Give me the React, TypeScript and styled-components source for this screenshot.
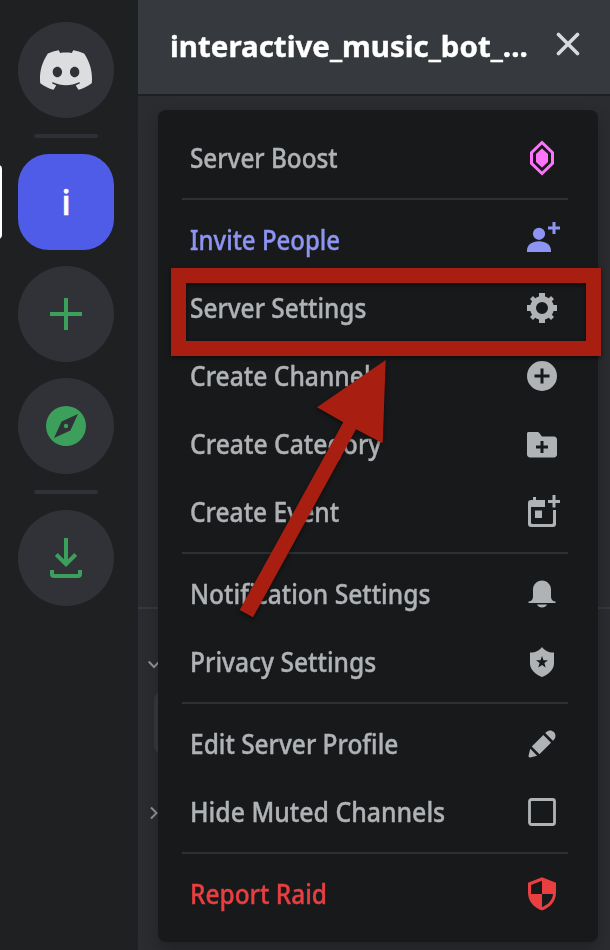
import React from 'react';
import styled, { createGlobalStyle } from 'styled-components';

const GlobalStyle = createGlobalStyle`
  * { box-sizing: border-box; }
  body {
    margin: 0;
    background: #1e2022;
    font-family: "Noto Sans", "Open Sans", sans-serif;
    overflow: hidden;
  }
  svg { display: block; flex: none; }
`;

const Page = styled.div`
  position: relative;
  display: flex;
  width: 610px;
  height: 950px;
  overflow: hidden;
`;

const Rail = styled.nav`
  position: relative;
  width: 138px;
  flex: none;
  display: flex;
  flex-direction: column;
  align-items: center;
  gap: 16px;
  padding: 22px 6px 0 0;
  background: #1e2022;
`;

const RailButton = styled.div<{ $active?: boolean; $color?: string }>`
  width: 96px;
  height: 96px;
  display: flex;
  align-items: center;
  justify-content: center;
  border-radius: ${(p) => (p.$active ? '31px' : '50%')};
  background: ${(p) => (p.$active ? '#4e5ce8' : '#313237')};
  color: ${(p) => p.$color ?? '#3c9f5b'};
  font-size: 34px;
  font-weight: 500;
  -webkit-text-stroke: ${(p) => (p.$active ? '0.6px currentColor' : '0')};
`;

const RailDivider = styled.div<{ $tone: string }>`
  width: 64px;
  height: 4px;
  border-radius: 2px;
  background: ${(p) => p.$tone};
`;

const ActivePill = styled.div`
  position: absolute;
  left: -6px;
  top: 165px;
  width: 8px;
  height: 74px;
  border-radius: 4px;
  background: #fff;
`;

const Panel = styled.main`
  position: relative;
  flex: 1;
  background: #2b2c30;
`;

const Header = styled.header`
  height: 96px;
  display: flex;
  align-items: center;
  justify-content: space-between;
  padding: 0 30px 6px 32px;
  background: #36393e;
  border-bottom: 2px solid #1f2023;
`;

const Title = styled.h1`
  margin: 0;
  padding-top: 3px;
  width: 358px;
  color: #fff;
  font-size: 28px;
  line-height: 40px;
  font-weight: 700;
  white-space: nowrap;
  transform-origin: left center;
  transform: scaleX(1.053);
  -webkit-text-stroke: 0.4px currentColor;
`;

const ChannelArea = styled.div`
  position: absolute;
  inset: 96px 0 0 0;
`;

const AreaLine = styled.div`
  position: absolute;
  top: 511px;
  width: 100%;
  height: 2px;
  background: #37383d;
`;

const SelectedChannel = styled.div`
  position: absolute;
  left: 16px;
  top: 596px;
  width: 400px;
  height: 62px;
  border-radius: 8px;
  background: #38393f;
`;

const Chevron = styled.svg<{ $x: number; $y: number }>`
  position: absolute;
  left: ${(p) => p.$x}px;
  top: ${(p) => p.$y}px;
  fill: none;
  stroke: #8f9298;
  stroke-width: 2;
`;

const Menu = styled.div`
  position: absolute;
  left: 20px;
  top: 110px;
  width: 440px;
  height: 832px;
  padding: 16px 30px 16px 24px;
  border-radius: 8px;
  background: #18191b;
  box-shadow: 0 8px 16px rgba(0, 0, 0, 0.24);
`;

const Group = styled.div`
  display: flex;
  flex-direction: column;
  gap: 4px;
  & + & {
    margin-top: 8px;
    padding-top: 8px;
    border-top: 2px solid #2f3033;
  }
`;

const Item = styled.div<{ $color?: string }>`
  height: 64px;
  display: flex;
  align-items: center;
  justify-content: space-between;
  padding: 0 8px;
  color: ${(p) => p.$color ?? '#b0b3b6'};
`;

const Label = styled.span<{ $scale: number }>`
  font-size: 27px;
  line-height: 36px;
  font-weight: 500;
  white-space: nowrap;
  transform-origin: left center;
  transform: scaleX(${(p) => p.$scale});
  -webkit-text-stroke: 0.4px currentColor;
`;

const Highlight = styled.div`
  position: absolute;
  left: 171px;
  top: 268px;
  width: 430px;
  height: 88px;
  border: 15px solid #a81f12;
  filter: drop-shadow(0 2px 2px rgba(0, 0, 0, 0.5));
`;

const Arrow = styled.svg`
  position: absolute;
  left: 230px;
  top: 350px;
  fill: #a81f12;
  filter: drop-shadow(0 2px 2px rgba(0, 0, 0, 0.5));
`;

const Icon = ({ grid = 36, children }: { grid?: number; children: React.ReactNode }) => (
  <svg width="36" height="36" viewBox={`0 0 ${grid} ${grid}`} fill="currentColor">
    {children}
  </svg>
);

const BoostIcon = () => (
  <Icon>
    <g fill="#ff73fa">
      <path fillRule="evenodd" d="M18 0.500 30 12V24L18 35.500 6 24V12ZM18 4.600 9 13.200V22.800L18 31.400 27 22.800V13.200Z" />
      <path d="M18 8.500 24 14V22L18 27.500 12 22V14Z" />
    </g>
  </Icon>
);
const InviteIcon = () => (
  <Icon>
    <circle cx="15" cy="11.8" r="6.1" />
    <path d="M3 30V28.5C3 23 8 19.3 15 19.3S27 23 27 28.5V30ZM28.5 0H31.5V4.5H36V7.5H31.5V12H28.5V7.5H24V4.5H28.5Z" />
  </Icon>
);
const GearIcon = () => (
  <Icon grid={24}>
    <path
      fillRule="evenodd"
      d="M19.738 10H22V14H19.739C19.498 14.931 19.1 15.798 18.565 16.564L20 18L18 20L16.565 18.564C15.797 19.099 14.932 19.498 14 19.738V22H10V19.738C9.069 19.498 8.203 19.099 7.436 18.564L6 20L4 18L5.436 16.564C4.901 15.799 4.502 14.932 4.262 14H2V10H4.262C4.502 9.068 4.9 8.202 5.436 7.436L4 6L6 4L7.436 5.436C8.202 4.9 9.068 4.502 10 4.262V2H14V4.261C14.932 4.502 15.797 4.9 16.565 5.435L18 4L20 6L18.564 7.436C19.099 8.202 19.498 9.069 19.738 10ZM12 16A4 4 0 1 0 12 8A4 4 0 1 0 12 16Z"
    />
  </Icon>
);
const PlusCircleIcon = () => (
  <Icon grid={24}>
    <path fillRule="evenodd" d="M12 2A10 10 0 1 0 12 22A10 10 0 1 0 12 2ZM17 13H13V17H11V13H7V11H11V7H13V11H17Z" />
  </Icon>
);
const FolderIcon = () => (
  <Icon grid={24}>
    <path
      fillRule="evenodd"
      d="M20 7H12L10.553 5.106C10.214 4.428 9.521 4 8.764 4H3C2.447 4 2 4.447 2 5V19C2 20.104 2.895 21 4 21H20C21.104 21 22 20.104 22 19V9C22 7.896 21.104 7 20 7ZM16 15H13V18H11V15H8V13H11V10H13V13H16Z"
    />
  </Icon>
);
const EventIcon = () => (
  <Icon>
    <path d="M9 3H12V6H21V13H7V28.5Q7 30 8.500 30H27.500Q29 30 29 28.500V16H32V30Q32 33 29 33H7Q4 33 4 30V9Q4 6 7 6H9Z" />
    <path d="M11 16.500H18V24H11ZM28.500 1H31.500V6H36V9H31.500V13.500H28.500V9H24V6H28.500Z" />
  </Icon>
);
const BellIcon = () => (
  <Icon grid={24}>
    <path
      fillRule="evenodd"
      d="M18 9V14C18 15.657 19.344 17 21 17V18H3V17C4.656 17 6 15.657 6 14V9C6 5.686 8.686 3 12 3C15.314 3 18 5.686 18 9ZM12 21C10.521 21 9.251 20.196 8.600 19H15.400C14.749 20.196 13.479 21 12 21Z"
    />
  </Icon>
);
const StarShieldIcon = () => (
  <Icon>
    <path
      fillRule="evenodd"
      d="M18 3C20.500 6.600 25 8.700 30 8.500V19.500C30 25.500 24.500 30.500 18 33C11.500 30.500 6 25.500 6 19.500V8.500C11 8.700 15.500 6.600 18 3ZM18 12 16.500 16.300H12L15.600 19.100 14.300 23.500 18 20.900 21.700 23.500 20.400 19.100 24 16.300H19.500Z"
    />
  </Icon>
);
const PencilIcon = () => (
  <Icon grid={24}>
    <path d="M19.2929 9.8299L19.9409 9.18278C21.353 7.77064 21.353 5.47197 19.9409 4.05892C18.5287 2.64678 16.2292 2.64678 14.817 4.05892L14.1699 4.70694L19.2929 9.8299ZM12.8962 5.97688L5.18469 13.6906L10.3085 18.813L18.0201 11.0992L12.8962 5.97688ZM4.11851 20.9704L8.75906 19.8112L4.18692 15.239L3.02678 19.8796C2.95028 20.1856 3.04028 20.5105 3.26349 20.7337C3.48669 20.9569 3.8116 21.046 4.11851 20.9704Z" />
  </Icon>
);
const CheckboxIcon = () => (
  <Icon>
    <rect x="5.500" y="5.500" width="25" height="25" rx="2" fill="none" stroke="currentColor" strokeWidth="2.800" />
  </Icon>
);
const RaidIcon = () => (
  <Icon>
    <path
      fillRule="evenodd"
      d="M18 1.300 32 6.800V16.500C32 25 26.500 31.500 18 34.500 9.500 31.500 4 25 4 16.500V6.800ZM18 4.700 7 9V18H18ZM18 18V31.200C24.500 28.500 28.500 24 29 18Z"
    />
  </Icon>
);

type Entry = { label: string; scale: number; icon: React.ReactNode; color?: string };

const groups: Entry[][] = [
  [{ label: 'Server Boost', scale: 0.9, icon: <BoostIcon /> }],
  [
    { label: 'Invite People', scale: 0.889, icon: <InviteIcon />, color: '#8e94f2' },
    { label: 'Server Settings', scale: 0.904, icon: <GearIcon /> },
    { label: 'Create Channel', scale: 0.912, icon: <PlusCircleIcon /> },
    { label: 'Create Category', scale: 0.915, icon: <FolderIcon /> },
    { label: 'Create Event', scale: 0.91, icon: <EventIcon /> },
  ],
  [
    { label: 'Notification Settings', scale: 0.911, icon: <BellIcon /> },
    { label: 'Privacy Settings', scale: 0.91, icon: <StarShieldIcon /> },
  ],
  [
    { label: 'Edit Server Profile', scale: 0.906, icon: <PencilIcon /> },
    { label: 'Hide Muted Channels', scale: 0.92, icon: <CheckboxIcon /> },
  ],
  [{ label: 'Report Raid', scale: 0.906, icon: <RaidIcon />, color: '#e93f41' }],
];

export default function App() {
  return (
    <>
      <GlobalStyle />
      <Page>
        <Rail>
          <ActivePill />
          <RailButton $color="#dcddde">
            <svg width="52" height="52" viewBox="0 0 24 24" fill="currentColor">
              <path d="M20.317 4.3698a19.7913 19.7913 0 0 0-4.8851-1.5152.0741.0741 0 0 0-.0785.0371c-.211.3753-.4447.8648-.6083 1.2495-1.8447-.2762-3.68-.2762-5.4868 0-.1636-.3933-.4058-.8742-.6177-1.2495a.077.077 0 0 0-.0785-.037 19.7363 19.7363 0 0 0-4.8852 1.515.0699.0699 0 0 0-.0321.0277C.5334 9.0458-.319 13.5799.0992 18.0578a.0824.0824 0 0 0 .0312.0561c2.0528 1.5076 4.0413 2.4228 5.9929 3.0294a.0777.0777 0 0 0 .0842-.0276c.4616-.6304.8731-1.2952 1.226-1.9942a.076.076 0 0 0-.0416-.1057c-.6528-.2476-1.2743-.5495-1.8722-.8923a.077.077 0 0 1-.0076-.1277c.1258-.0943.2517-.1923.3718-.2914a.0743.0743 0 0 1 .0776-.0105c3.9278 1.7933 8.18 1.7933 12.0614 0a.0739.0739 0 0 1 .0785.0095c.1202.099.246.1981.3728.2924a.077.077 0 0 1-.0066.1276 12.2986 12.2986 0 0 1-1.873.8914.0766.0766 0 0 0-.0407.1067c.3604.698.7719 1.3628 1.225 1.9932a.076.076 0 0 0 .0842.0286c1.961-.6067 3.9495-1.5219 6.0023-3.0294a.077.077 0 0 0 .0313-.0552c.5004-5.177-.8382-9.6739-3.5485-13.6604a.061.061 0 0 0-.0312-.0286zM8.02 15.3312c-1.1825 0-2.1569-1.0857-2.1569-2.419 0-1.3332.9555-2.4189 2.157-2.4189 1.2108 0 2.1757 1.0952 2.1568 2.419 0 1.3332-.9555 2.4189-2.1569 2.4189zm7.9748 0c-1.1825 0-2.1569-1.0857-2.1569-2.419 0-1.3332.9554-2.4189 2.1569-2.4189 1.2108 0 2.1757 1.0952 2.1568 2.419 0 1.3332-.946 2.4189-2.1568 2.4189Z" />
            </svg>
          </RailButton>
          <RailDivider $tone="#2d3136" />
          <RailButton $active $color="#fff">i</RailButton>
          <RailButton>
            <svg width="32" height="32" viewBox="0 0 32 32" fill="currentColor">
              <path d="M14 0H18V14H32V18H18V32H14V18H0V14H14Z" />
            </svg>
          </RailButton>
          <RailButton>
            <svg width="48" height="48" viewBox="0 0 24 24" fill="currentColor">
              <path fillRule="evenodd" d="M12 2A10 10 0 1 0 12 22A10 10 0 1 0 12 2ZM14.190 14.190 6 18 9.810 9.810 18 6Z" />
              <circle cx="12" cy="12" r="1.100" />
            </svg>
          </RailButton>
          <RailDivider $tone="#313237" />
          <RailButton>
            <svg width="32" height="40" viewBox="0 0 32 40" fill="none" stroke="currentColor" strokeWidth="4">
              <path d="M16 0V26M6.300 16.500 16 26.200 25.700 16.500M2 32V36Q2 38 4 38H28Q30 38 30 36V32" />
            </svg>
          </RailButton>
        </Rail>
        <Panel>
          <Header>
            <Title>interactive_music_bot_...</Title>
            <svg width="24" height="24" viewBox="0 0 24 24" fill="none" stroke="#d8dadc" strokeWidth="3.600" strokeLinecap="round">
              <path d="M2.500 2.500 21.500 21.500M21.500 2.500 2.500 21.500" />
            </svg>
          </Header>
          <ChannelArea>
            <AreaLine />
            <Chevron $x={10} $y={564} width="12" height="10" viewBox="0 0 12 10">
              <path d="M0.700 1.500 6 7 11.300 1.500" />
            </Chevron>
            <SelectedChannel />
            <Chevron $x={12} $y={710} width="9" height="14" viewBox="0 0 9 14">
              <path d="M1 1.500 6.500 7 1 12.500" />
            </Chevron>
          </ChannelArea>
          <Menu>
            {groups.map((group, i) => (
              <Group key={i}>
                {group.map((entry) => (
                  <Item key={entry.label} $color={entry.color}>
                    <Label $scale={entry.scale}>{entry.label}</Label>
                    {entry.icon}
                  </Item>
                ))}
              </Group>
            ))}
          </Menu>
        </Panel>
        <Highlight />
        <Arrow width="170" height="280" viewBox="230 350 170 280">
          <path d="M385.700 360 317 407.300 343.300 422.300 239.700 610 253 617.300 356 429.300 382.700 443.300Z" />
        </Arrow>
      </Page>
    </>
  );
}
